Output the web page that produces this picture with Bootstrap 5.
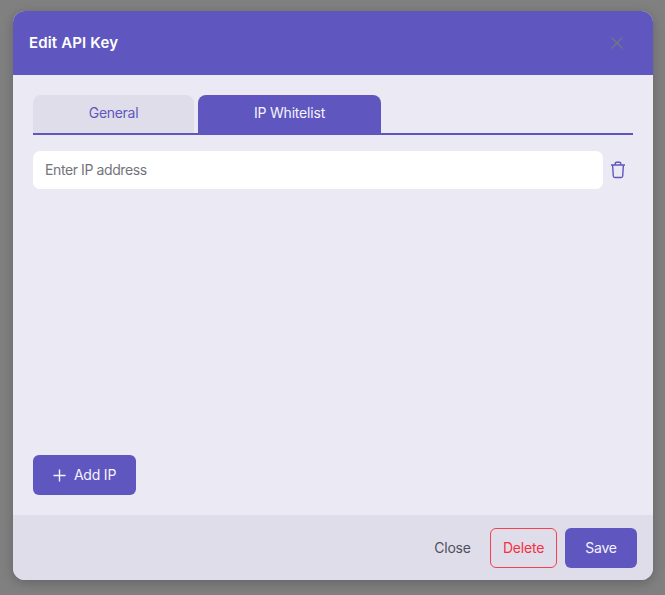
<!DOCTYPE html>
<html lang="en">
<head>
<meta charset="utf-8">
<title>Edit API Key</title>
<link href="https://cdn.jsdelivr.net/npm/bootstrap@5.3.0/dist/css/bootstrap.min.css" rel="stylesheet">
<style>
html,body{height:100%;overflow:hidden}
body{background:#808080;font-family:Inter,"Liberation Sans",sans-serif;font-size:14px;letter-spacing:-.2px;padding:11px 12px 15px 13px}
.key-modal{width:640px;height:569px;background:#ebe9f4;border:0;border-radius:12px;overflow:hidden;box-shadow:0 3px 12px rgba(0,0,0,.22)}
.key-modal .modal-header{height:64px;flex:none;background:#5f57bf;color:#fff;border:0;border-radius:0;padding:0 16px}
.key-modal .modal-title{font-size:15px;font-weight:600;letter-spacing:.15px}
.x-btn{background:none;border:0;padding:0;width:16px;height:16px;margin-right:12px;line-height:0;color:#73738a}
.key-modal .modal-body{padding:20px;min-height:0}
.tab-row{border-bottom:2px solid #5f57bf;gap:4px;height:40px;flex:none}
.tab-row .nav-link{height:38px;border:0;border-radius:8px 8px 0 0;background:#dfddea;color:#5f57bf;font-size:14px;padding:0 0 1px;text-align:center;line-height:36px;width:161px;letter-spacing:-.3px}
.tab-row .nav-link.active{background:#5f57bf;color:#f4f3ff;width:183px;letter-spacing:-.2px}
.ip-input.form-control{height:38px;background:#fff;border:0;border-radius:7px;font-size:14px;padding:0 12px 2px;letter-spacing:-.4px}
.ip-input.form-control::placeholder{color:#74747c}
.trash-btn{background:none;border:0;padding:0;width:30px;line-height:0;color:#5f57bf;flex:none}
.main-btn{background:#5f57bf;border:0;color:#f4f3ff;border-radius:6px;height:40px;font-size:14px;letter-spacing:-.2px}
.main-btn:hover{background:#5f57bf;color:#fff}
.add-btn{width:103px}
.add-btn span{padding-bottom:2px}
.save-btn{width:72px;padding:0 0 1px!important}
.key-modal .modal-footer{height:65px;flex:none;background:#dfddea;border:0;border-radius:0;padding:0 16px;gap:8px;flex-wrap:nowrap}
.key-modal .modal-footer>*{margin:0}
.close-btn{background:none;border:0;color:#4f4f5c;font-size:14px;height:40px;width:59px;padding:0 0 1px;letter-spacing:-.25px}
.del-btn{background:none;border:1px solid #f5404e;color:#f5303f;border-radius:6px;font-size:14px;height:40px;width:67px;padding:0 0 1px;letter-spacing:-.2px}
</style>
</head>
<body>
<div class="modal-content key-modal d-flex flex-column">
  <div class="modal-header d-flex align-items-center justify-content-between">
    <h5 class="modal-title">Edit API Key</h5>
    <button type="button" class="x-btn" aria-label="Close">
      <svg width="16" height="16" viewBox="0 0 16 16" fill="none" stroke="currentColor" stroke-width="1.4"><path d="M2.5 2.5l11 11M13.5 2.5l-11 11"/></svg>
    </button>
  </div>
  <div class="modal-body d-flex flex-column">
    <ul class="nav tab-row">
      <li class="nav-item"><a class="nav-link" href="#">General</a></li>
      <li class="nav-item"><a class="nav-link active" href="#">IP Whitelist</a></li>
    </ul>
    <div class="d-flex align-items-center mt-3">
      <input type="text" class="form-control ip-input" placeholder="Enter IP address">
      <button type="button" class="trash-btn" aria-label="Delete">
        <svg width="16" height="18" viewBox="0 0 16 18" fill="none" stroke="currentColor" stroke-width="1.4" stroke-linejoin="round"><path d="M1 4h14M5.2 4V2.6A1.4 1.4 0 0 1 6.6 1.2h2.8a1.4 1.4 0 0 1 1.4 1.4V4M2.6 4l.7 11a1.6 1.6 0 0 0 1.6 1.5h6.2a1.6 1.6 0 0 0 1.6-1.5l.7-11"/></svg>
      </button>
    </div>
    <div class="mt-auto">
      <button type="button" class="btn main-btn add-btn d-inline-flex align-items-center justify-content-center gap-2 p-0">
        <svg width="13" height="13" viewBox="0 0 13 13" fill="none" stroke="currentColor" stroke-width="1.4"><path d="M6.5 0.5v12M0.5 6.5h12"/></svg>
        <span>Add IP</span>
      </button>
    </div>
  </div>
  <div class="modal-footer d-flex justify-content-end align-items-center">
    <button type="button" class="btn close-btn">Close</button>
    <button type="button" class="btn del-btn">Delete</button>
    <button type="button" class="btn main-btn save-btn">Save</button>
  </div>
</div>
<script src="https://cdn.jsdelivr.net/npm/bootstrap@5.3.0/dist/js/bootstrap.bundle.min.js"></script>
</body>
</html>
